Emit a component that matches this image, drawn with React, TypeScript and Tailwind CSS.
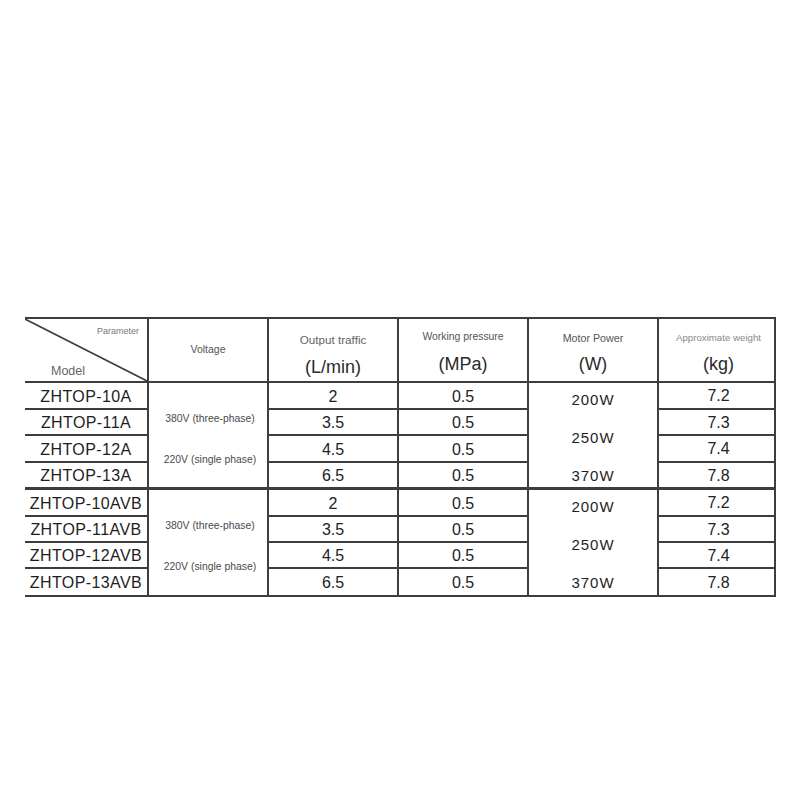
import React from "react";

type Row = { model: string; out: string; pres: string; w: string };

const group1: Row[] = [
  { model: "ZHTOP-10A", out: "2", pres: "0.5", w: "7.2" },
  { model: "ZHTOP-11A", out: "3.5", pres: "0.5", w: "7.3" },
  { model: "ZHTOP-12A", out: "4.5", pres: "0.5", w: "7.4" },
  { model: "ZHTOP-13A", out: "6.5", pres: "0.5", w: "7.8" },
];
const group2: Row[] = [
  { model: "ZHTOP-10AVB", out: "2", pres: "0.5", w: "7.2" },
  { model: "ZHTOP-11AVB", out: "3.5", pres: "0.5", w: "7.3" },
  { model: "ZHTOP-12AVB", out: "4.5", pres: "0.5", w: "7.4" },
  { model: "ZHTOP-13AVB", out: "6.5", pres: "0.5", w: "7.8" },
];

function Group({ rows, thick }: { rows: Row[]; thick: boolean }) {
  return (
    <>
      {rows.map((r, i) => {
        const last = i === rows.length - 1;
        const bb = last && thick ? "border-b-[3px]" : "border-b-2";
        return (
          <React.Fragment key={r.model}>
            <div className={`${bb} border-r-2 border-[#3d3d3d] flex items-center justify-center pt-[2px] text-[16px] tracking-[0.4px] text-[#1e1e1e]`}>
              {r.model}
            </div>
            {i === 0 && (
              <div className={`row-span-4 ${thick ? "border-b-[3px]" : "border-b-2"} border-r-2 border-[#3d3d3d] flex flex-col items-center justify-center gap-[27px] pt-[8px] pl-[4px] text-[10.4px] leading-[14px] text-[#4a4a4a]`}>
                <span>380V (three-phase)</span>
                <span>220V (single phase)</span>
              </div>
            )}
            <div className={`${bb} border-r-2 border-[#3d3d3d] flex items-center justify-center pt-[2px] text-[16px] text-[#222]`}>
              {r.out}
            </div>
            <div className={`${bb} border-r-2 border-[#3d3d3d] flex items-center justify-center pt-[2px] text-[16px] text-[#222]`}>
              {r.pres}
            </div>
            {i === 0 && (
              <div className={`row-span-4 ${thick ? "border-b-[3px]" : "border-b-2"} border-r-2 border-[#3d3d3d] flex flex-col items-center justify-center gap-[20px] pt-[5px] text-[15px] leading-[18px] tracking-[1px] text-[#1e1e1e]`}>
                <span>200W</span>
                <span>250W</span>
                <span>370W</span>
              </div>
            )}
            <div className={`${bb} border-r-2 border-[#3d3d3d] flex items-center justify-center pl-[4px] pt-[1px] text-[16px] text-[#222]`}>
              {r.w}
            </div>
          </React.Fragment>
        );
      })}
    </>
  );
}

export default function App() {
  return (
    <div className="w-[800px] h-[800px] bg-white overflow-hidden" style={{ fontFamily: '"Liberation Sans", Arial, sans-serif' }}>
      <div className="ml-[25px] mt-[317px] w-[751px] border-t-2 border-[#3d3d3d] grid grid-cols-[124px_120px_130px_130px_130px_117px] grid-rows-[64px_27px_26px_27px_27px_27px_26px_26px_28px]">
        {/* Header */}
        <div className="relative border-b-2 border-r-2 border-[#3d3d3d] flex flex-col justify-between">
          <svg className="absolute inset-0 w-full h-full" viewBox="0 0 122 62" preserveAspectRatio="none">
            <line x1="0" y1="0" x2="122" y2="62" stroke="#3d3d3d" strokeWidth="1.6" />
          </svg>
          <span className="self-end mr-[8px] mt-[6px] text-[9px] leading-[12px] text-[#777]">Parameter</span>
          <span className="ml-[26px] mb-[2px] text-[12.5px] leading-[16px] text-[#666]">Model</span>
        </div>
        <div className="border-b-2 border-r-2 border-[#3d3d3d] flex items-center justify-center text-[10.5px] text-[#555]">
          Voltage
        </div>
        <div className="border-b-2 border-r-2 border-[#3d3d3d] flex flex-col items-center pt-[14px] gap-[10px]">
          <span className="text-[11.7px] leading-[14px] text-[#666]">Output traffic</span>
          <span className="text-[18px] leading-[20px] text-[#2a2a2a]">(L/min)</span>
        </div>
        <div className="border-b-2 border-r-2 border-[#3d3d3d] flex flex-col items-center pt-[11px] gap-[10px]">
          <span className="text-[10.4px] leading-[14px] text-[#555]">Working pressure</span>
          <span className="text-[18px] leading-[20px] text-[#2a2a2a]">(MPa)</span>
        </div>
        <div className="border-b-2 border-r-2 border-[#3d3d3d] flex flex-col items-center pt-[12px] gap-[9px]">
          <span className="text-[10.7px] leading-[14px] text-[#555]">Motor Power</span>
          <span className="text-[17.6px] leading-[20px] text-[#2a2a2a]">(W)</span>
        </div>
        <div className="border-b-2 border-r-2 border-[#3d3d3d] flex flex-col items-center pt-[12px] gap-[9px] pl-[4px]">
          <span className="text-[9.7px] leading-[14px] text-[#888]">Approximate weight</span>
          <span className="text-[18px] leading-[20px] text-[#2a2a2a]">(kg)</span>
        </div>
        <Group rows={group1} thick={true} />
        <Group rows={group2} thick={false} />
      </div>
    </div>
  );
}
